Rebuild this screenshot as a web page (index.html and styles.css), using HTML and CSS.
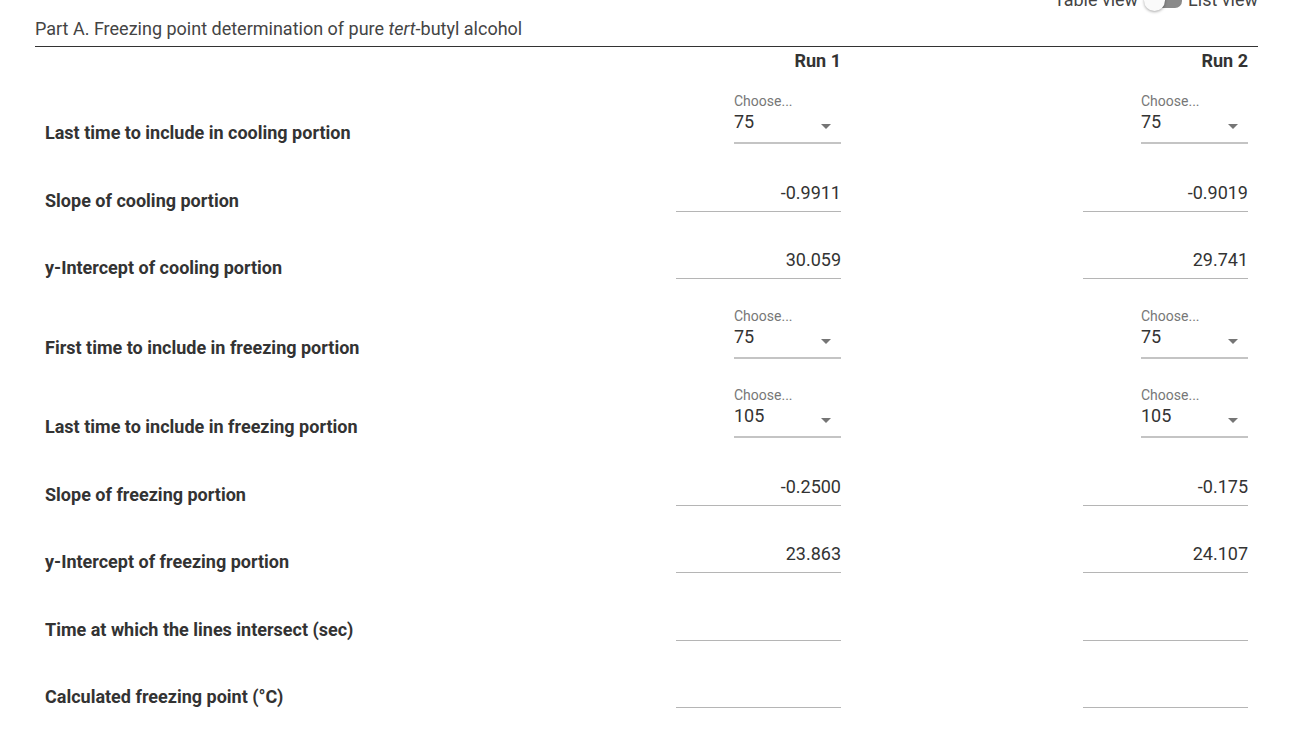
FILE: index.html
```html
<!DOCTYPE html>
<html>
<head>
<meta charset="utf-8">
<link rel="stylesheet" href="styles.css">
</head>
<body>
<div class="page">
  <div class="viewbar">
    <span class="viewlabel">Table view</span>
    <span class="switch"><span class="track"></span><span class="thumb"></span></span>
    <span class="viewlabel">List view</span>
  </div>
  <div class="title">Part A. Freezing point determination of pure <i>tert</i>-butyl alcohol</div>
  <div class="table">
    <div class="row head">
      <div class="label"></div>
      <div class="colhead">Run 1</div>
      <div class="colhead">Run 2</div>
    </div>

    <div class="row sel-row">
      <div class="label">Last time to include in cooling portion</div>
      <div class="select"><div class="choose">Choose...</div><div class="selval"><span>75</span><span class="arrow"></span></div></div>
      <div class="select"><div class="choose">Choose...</div><div class="selval"><span>75</span><span class="arrow"></span></div></div>
    </div>

    <div class="row in-row">
      <div class="label">Slope of cooling portion</div>
      <div class="input">-0.9911</div>
      <div class="input">-0.9019</div>
    </div>

    <div class="row in-row">
      <div class="label">y-Intercept of cooling portion</div>
      <div class="input">30.059</div>
      <div class="input">29.741</div>
    </div>

    <div class="row sel-row">
      <div class="label">First time to include in freezing portion</div>
      <div class="select"><div class="choose">Choose...</div><div class="selval"><span>75</span><span class="arrow"></span></div></div>
      <div class="select"><div class="choose">Choose...</div><div class="selval"><span>75</span><span class="arrow"></span></div></div>
    </div>

    <div class="row sel-row">
      <div class="label">Last time to include in freezing portion</div>
      <div class="select"><div class="choose">Choose...</div><div class="selval"><span>105</span><span class="arrow"></span></div></div>
      <div class="select"><div class="choose">Choose...</div><div class="selval"><span>105</span><span class="arrow"></span></div></div>
    </div>

    <div class="row in-row">
      <div class="label">Slope of freezing portion</div>
      <div class="input">-0.2500</div>
      <div class="input">-0.175</div>
    </div>

    <div class="row in-row">
      <div class="label">y-Intercept of freezing portion</div>
      <div class="input">23.863</div>
      <div class="input">24.107</div>
    </div>

    <div class="row in-row">
      <div class="label">Time at which the lines intersect (sec)</div>
      <div class="input"></div>
      <div class="input"></div>
    </div>

    <div class="row in-row">
      <div class="label">Calculated freezing point (°C)</div>
      <div class="input"></div>
      <div class="input"></div>
    </div>
  </div>
</div>
</body>
</html>
```

FILE: styles.css
```css
* { box-sizing: border-box; }
html, body { margin: 0; padding: 0; background: #fff; }
body {
  font-family: Roboto, "Liberation Sans", Arial, sans-serif;
  color: #333;
  overflow: hidden;
}
.page {
  padding: 0 44px 0 35px;
}
.viewbar {
  margin-top: -12px;
  height: 24px;
  display: flex;
  justify-content: flex-end;
  align-items: center;
  gap: 6px;
  font-size: 18px;
  color: #444;
}
.viewlabel { line-height: 24px; }
.switch {
  position: relative;
  width: 38px;
  height: 21px;
  display: inline-block;
}
.track {
  position: absolute;
  left: 4px;
  right: 0;
  top: 4px;
  height: 14px;
  border-radius: 7px;
  background: #8a8a8a;
}
.thumb {
  position: absolute;
  left: 0;
  top: 0;
  width: 21px;
  height: 21px;
  border-radius: 50%;
  background: #fafafa;
  box-shadow: 0 1px 3px rgba(0,0,0,.35);
}
.title {
  padding: 7px 0 7px;
  line-height: 20px;
  font-size: 18px;
  color: #444;
  border-bottom: 1px solid #333;
}
.table { display: flex; flex-direction: column; }
.row {
  display: grid;
  grid-template-columns: 1fr 407px 407px;
  align-items: end;
  padding-bottom: 10px;
}
.row.head {
  padding: 4px 0 3.5px;
  height: 27.5px;
}
.sel-row { height: 79.5px; }
.in-row { height: 67.5px; }
.colhead {
  justify-self: end;
  margin-right: 10px;
  font-weight: 700;
  font-size: 18px;
  line-height: 20px;
  color: #333;
}
.label {
  padding: 0 10px 1px;
  font-size: 18px;
  line-height: 20px;
  font-weight: 700;
  color: #333;
}
.input {
  justify-self: end;
  margin-right: 10px;
  width: 165px;
  height: 30px;
  padding-bottom: 8px;
  text-align: right;
  font-size: 18px;
  line-height: 20px;
  color: #333;
  border-bottom: 1px solid #b5b5b5;
  display: flex;
  align-items: flex-end;
  justify-content: flex-end;
}
.select {
  justify-self: end;
  margin-right: 10px;
  width: 107px;
  padding-bottom: 10px;
  border-bottom: 2px solid #c4c4c4;
}
.choose {
  font-size: 14px;
  line-height: 14px;
  color: #777;
  margin-bottom: 4px;
}
.selval {
  display: flex;
  justify-content: space-between;
  align-items: flex-end;
  font-size: 18px;
  line-height: 20px;
  color: #333;
}
.arrow {
  width: 0;
  height: 0;
  margin: 0 10px 3px 0;
  border-left: 5px solid transparent;
  border-right: 5px solid transparent;
  border-top: 5px solid #757575;
}
```
